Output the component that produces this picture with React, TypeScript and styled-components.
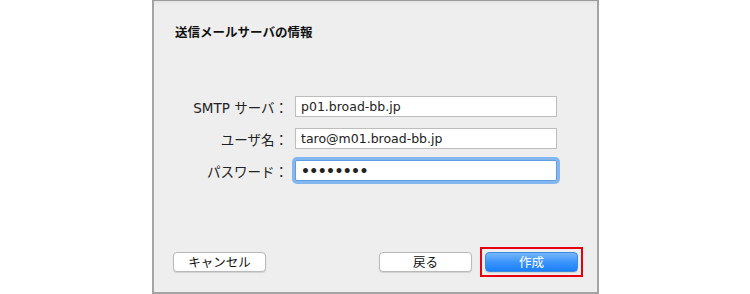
import styled, { createGlobalStyle } from 'styled-components';

const GlobalStyle = createGlobalStyle`
  html, body {
    margin: 0;
    padding: 0;
    background: #ffffff;
  }
  body {
    font-family: 'DejaVu Sans', 'Noto Sans CJK JP', sans-serif;
    color: #222;
  }
`;

const Page = styled.div`
  width: 750px;
  height: 294px;
  overflow: hidden;
  display: flex;
`;

const Sheet = styled.div`
  box-sizing: border-box;
  margin-left: 152px;
  width: 447px;
  height: 294px;
  background: linear-gradient(#e4e4e4 0, #eeeeee 4px, #eeeeee 100%);
  border: 2px solid #a4a4a4;
  border-top: 1px solid #9c9c9c;
  padding: 0 19px;
  display: flex;
  flex-direction: column;
`;

const Title = styled.h1`
  margin: 22px 0 0 2px;
  font-family: 'Noto Sans CJK JP', sans-serif;
  font-size: 12.5px;
  line-height: 18px;
  font-weight: 700;
  color: #111;
`;

const Form = styled.div`
  margin-top: 55px;
  display: grid;
  grid-template-columns: 115px 262px;
  column-gap: 7px;
  row-gap: 11px;
  align-items: center;
`;

const Label = styled.label`
  text-align: right;
  font-family: 'DejaVu Sans', 'Noto Sans CJK JP', sans-serif;
  font-size: 13.5px;
  color: #222;
  white-space: nowrap;
`;

const Field = styled.input<{ $focused?: boolean; $secret?: boolean }>`
  box-sizing: border-box;
  width: 262px;
  height: 21px;
  margin: 0;
  padding: 0 5px;
  border: 1px solid ${({ $focused }) => ($focused ? '#5e9de6' : '#bdbdbd')};
  box-shadow: ${({ $focused }) => ($focused ? '0 0 0 3px #84b7ef' : 'none')};
  border-radius: ${({ $focused }) => ($focused ? '2px' : '0')};
  background: #fff;
  font-family: 'DejaVu Sans', sans-serif;
  font-size: ${({ $secret }) => ($secret ? '14px' : '12.5px')};
  font-weight: ${({ $secret }) => ($secret ? 700 : 400)};
  letter-spacing: ${({ $secret }) => ($secret ? '-0.6px' : '0')};
  color: #222;
  outline: none;
`;

const Actions = styled.div`
  margin-top: auto;
  margin-bottom: 20px;
  display: flex;
  justify-content: space-between;
  align-items: center;
`;

const Group = styled.div`
  display: flex;
  gap: 13px;
`;

const Button = styled.button<{ $primary?: boolean }>`
  box-sizing: border-box;
  width: 93px;
  height: 20px;
  padding: 0;
  border-radius: 4px;
  border: 1px solid ${({ $primary }) => ($primary ? '#3b8ae6' : '#b9b9b9')};
  background: ${({ $primary }) =>
    $primary ? 'linear-gradient(#75b7fb 0%, #3d95fb 50%, #1a7ffa 100%)' : '#ffffff'};
  color: ${({ $primary }) => ($primary ? '#ffffff' : '#111')};
  font-family: 'Noto Sans CJK JP', sans-serif;
  font-size: 12.5px;
  line-height: 18px;
  box-shadow: 0 1px 1px rgba(0, 0, 0, 0.12);
`;

const Highlight = styled.div`
  display: flex;
  outline: 2px solid #e60012;
  outline-offset: 3px;
`;

export default function App() {
  return (
    <>
      <GlobalStyle />
      <Page>
        <Sheet>
          <Title>送信メールサーバの情報</Title>
          <Form>
            <Label>SMTP サーバ：</Label>
            <Field readOnly value="p01.broad-bb.jp" />
            <Label>ユーザ名：</Label>
            <Field readOnly value="taro@m01.broad-bb.jp" />
            <Label>パスワード：</Label>
            <Field readOnly $focused $secret value="••••••••" />
          </Form>
          <Actions>
            <Button>キャンセル</Button>
            <Group>
              <Button>戻る</Button>
              <Highlight>
                <Button $primary>作成</Button>
              </Highlight>
            </Group>
          </Actions>
        </Sheet>
      </Page>
    </>
  );
}
